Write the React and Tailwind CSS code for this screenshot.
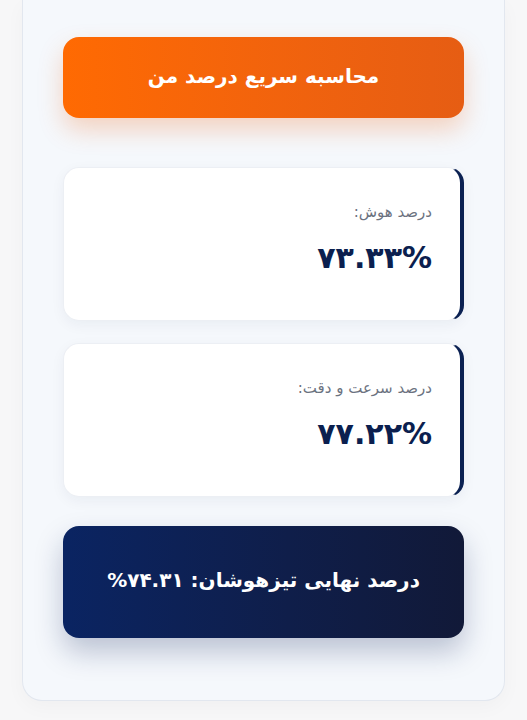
import React from "react";

const font = { fontFamily: '"DejaVu Sans", "Noto Sans", sans-serif' };

function StatCard({ label, value }) {
  return (
    <div className="flex h-[154px] flex-col justify-start gap-5 rounded-2xl border border-[#eceff4] border-r-4 border-r-[#0b2152] bg-white px-7 pt-[33px] shadow-[0_4px_14px_rgba(15,30,70,0.05)]">
      <div className="text-[15px] leading-[22px] text-[#6b7280]">{label}</div>
      <div className="text-[30px] font-bold leading-none text-[#0b1f4f]">{value}</div>
    </div>
  );
}

export default function App() {
  return (
    <div dir="rtl" style={font} className="min-h-[720px] w-full bg-[#f7f7f8]">
      <div className="mx-[22px] flex flex-col rounded-b-[20px] border-x border-b border-[#e2e7ef] bg-[#f5f8fc] px-10 pt-[37px] pb-[62px] shadow-[0_6px_20px_rgba(0,0,0,0.03)]">
        <div className="flex h-[81px] items-center justify-center rounded-2xl bg-gradient-to-r from-[#ff6a02] to-[#e65d13] pb-1 text-[20px] font-bold text-white shadow-[0_12px_24px_rgba(240,100,20,0.25)]">
          محاسبه سریع درصد من
        </div>
        <div className="mt-[49px] flex flex-col gap-[22px]">
          <StatCard label="درصد هوش:" value="۷۳.۳۳%" />
          <StatCard label="درصد سرعت و دقت:" value="۷۷.۲۲%" />
        </div>
        <div className="mt-[29px] flex h-[112px] items-center justify-center rounded-2xl bg-gradient-to-r from-[#0a2462] to-[#111938] pb-1 text-[20px] font-bold text-white shadow-[0_14px_28px_rgba(15,35,90,0.25)]">
          درصد نهایی تیزهوشان: ۷۴.۳۱%
        </div>
      </div>
    </div>
  );
}
